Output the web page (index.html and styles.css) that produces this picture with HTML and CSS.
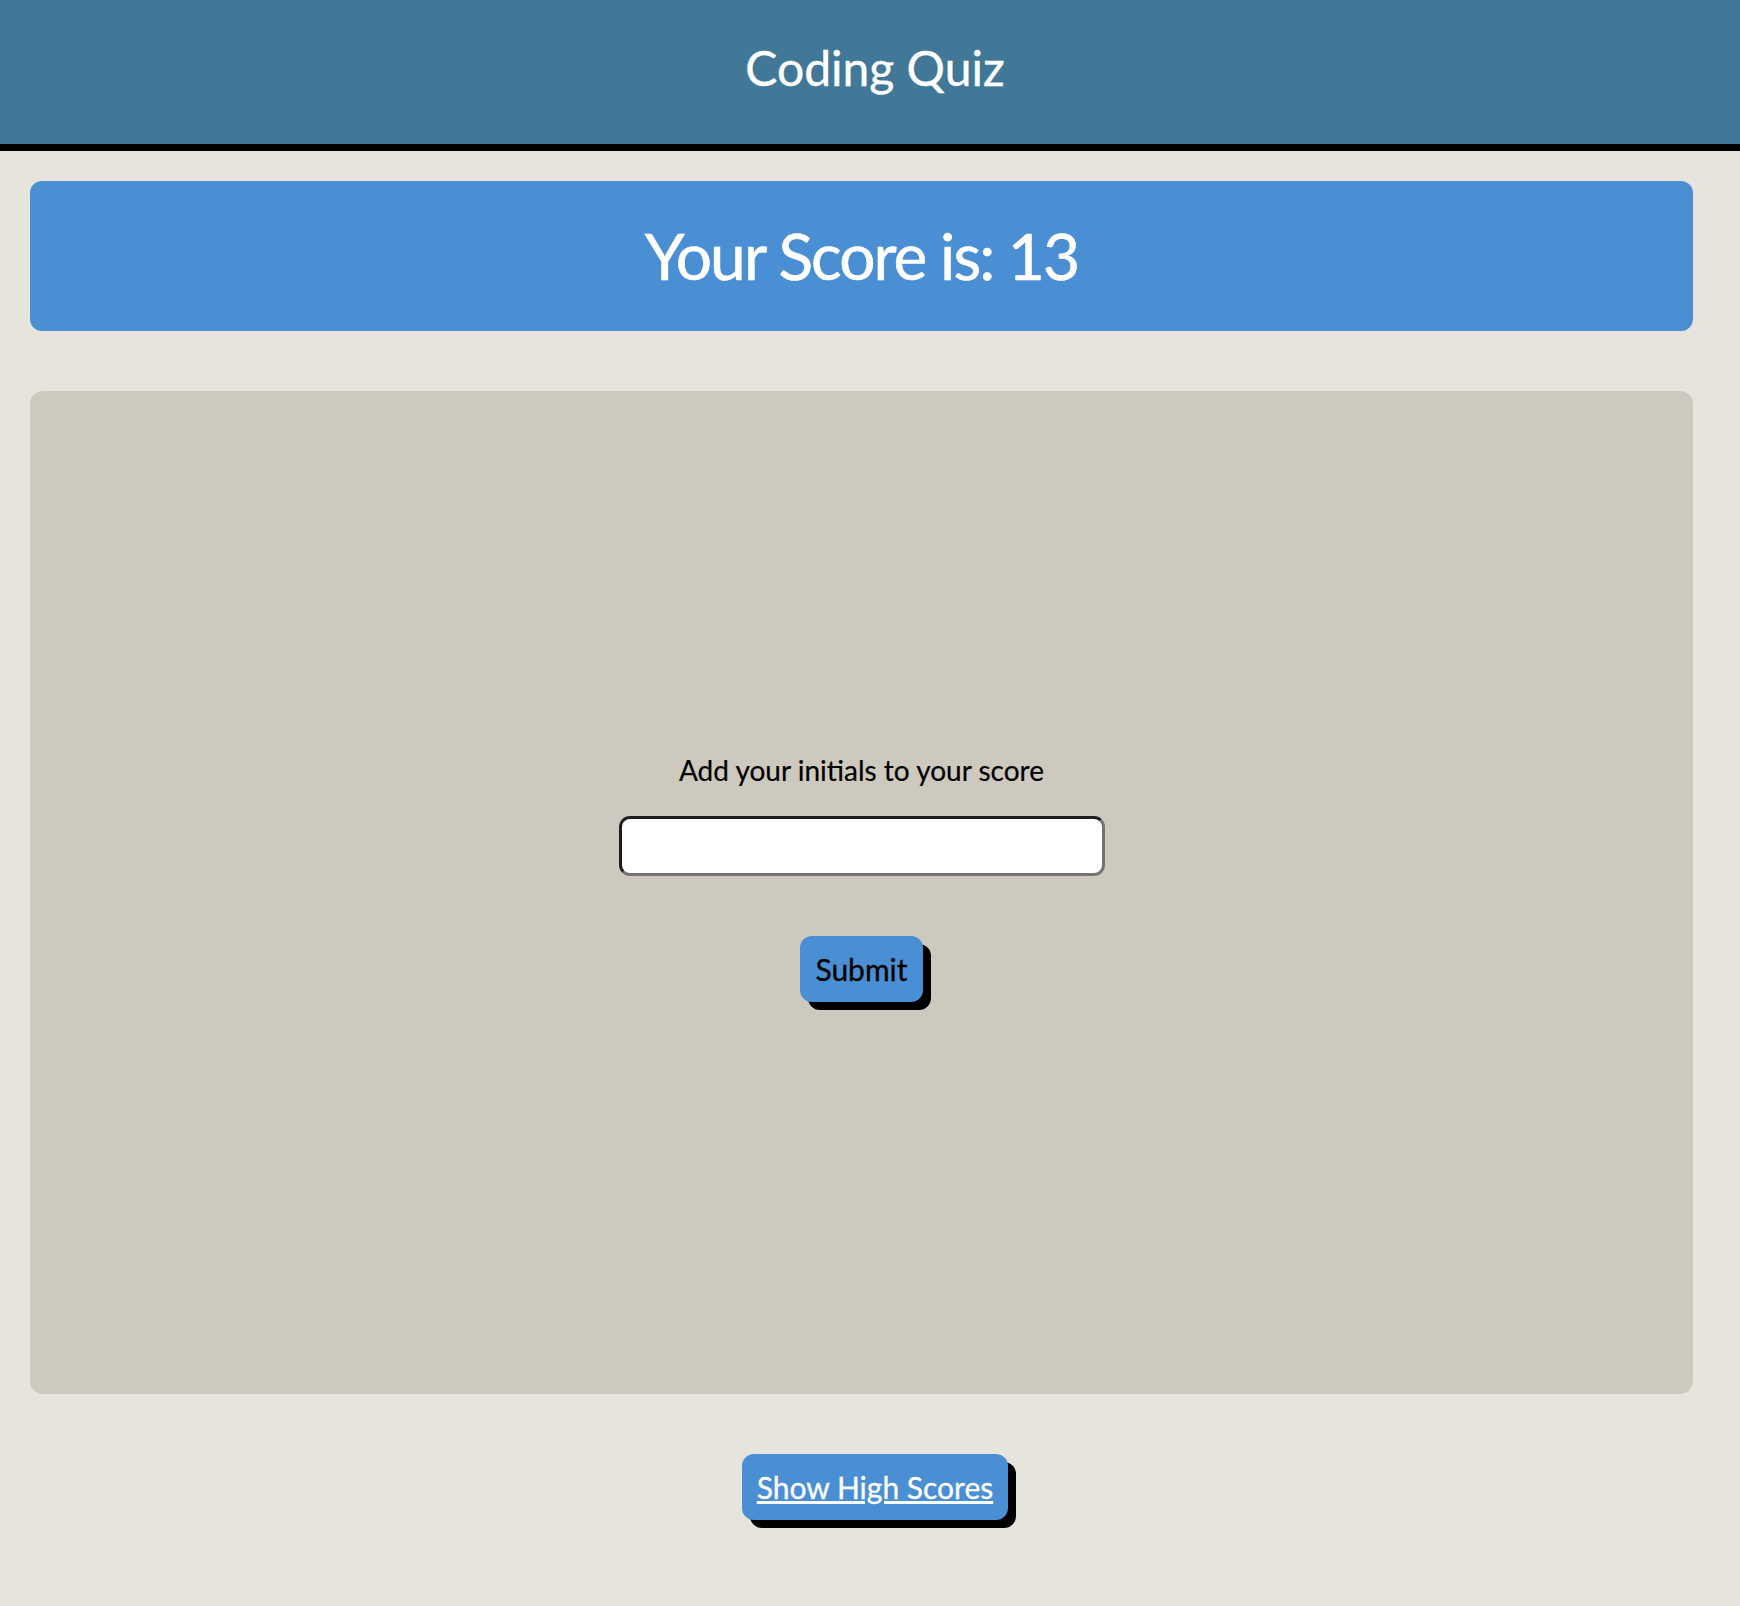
FILE: index.html
```html
<!DOCTYPE html>
<html lang="en">
<head>
<meta charset="utf-8">
<title>Coding Quiz</title>
<link rel="stylesheet" href="styles.css">
</head>
<body>
<header class="site-header">
  <h1 class="site-title">Coding Quiz</h1>
</header>
<main class="main">
  <section class="score-banner">
    <h2 class="score-text">Your Score is: 13</h2>
  </section>
  <section class="panel">
    <form class="initials-form">
      <label class="initials-label" for="initials">Add your initials to your score</label>
      <input class="initials-input" id="initials" type="text">
      <button class="btn btn-submit" type="button">Submit</button>
    </form>
  </section>
</main>
<div class="footer-actions">
  <a class="btn btn-link" href="#">Show High Scores</a>
</div>
</body>
</html>
```
FILE: styles.css
```css
html, body {
  margin: 0;
  padding: 0;
}
body {
  background: #e7e3dd;
  font-family: Lato, "Noto Sans", sans-serif;
  width: 1740px;
  min-height: 1606px;
}
.site-header {
  background: #417797;
  border-bottom: 7px solid #000;
  height: 144px;
  display: flex;
  align-items: center;
  justify-content: center;
  padding-left: 10px;
}
.site-title {
  margin: -8px 0 0;
  color: #fff;
  font-size: 48px;
  font-weight: 400;
  line-height: 1;
  -webkit-text-stroke: 0.4px #fff;
}
.main {
  margin-left: 30px;
  width: 1663px;
  padding-top: 30px;
}
.score-banner {
  background: #4a8fd4;
  border-radius: 12px;
  height: 150px;
  display: flex;
  align-items: center;
  justify-content: center;
}
.score-text {
  margin: 0;
  color: #fff;
  font-size: 64px;
  font-weight: 400;
  line-height: 1;
  letter-spacing: -1.9px;
  -webkit-text-stroke: 0.6px #fff;
}
.panel {
  margin-top: 60px;
  background: #cdc9be;
  border-radius: 13px;
  height: 1003px;
  box-sizing: border-box;
  padding-top: 362px;
  display: flex;
  justify-content: center;
  align-items: flex-start;
}
.initials-form {
  display: flex;
  flex-direction: column;
  align-items: center;
}
.initials-label {
  font-size: 28px;
  line-height: 34px;
  color: #000;
  -webkit-text-stroke: 0.2px #000;
}
.initials-input {
  margin-top: 29px;
  width: 486px;
  height: 60px;
  box-sizing: border-box;
  border: 3px solid;
  border-color: #1e1e1e #747474 #747474 #1e1e1e;
  border-radius: 11px;
  background: #fff;
  padding: 0 8px;
  font-size: 20px;
}
.btn {
  font-family: Lato, "Noto Sans", sans-serif;
  font-size: 30px;
  line-height: 36px;
  padding: 15px;
  background: #4a8fd4;
  border: none;
  border-radius: 12px;
  box-shadow: 8px 8px 0 #000;
  display: inline-block;
  -webkit-text-stroke: 0.3px currentColor;
}
.btn-submit {
  margin-top: 60px;
  color: #000;
}
.footer-actions {
  display: flex;
  justify-content: center;
  padding-left: 10px;
  padding-top: 60px;
}
.btn-link {
  color: #fff;
  text-decoration: underline;
}
```
